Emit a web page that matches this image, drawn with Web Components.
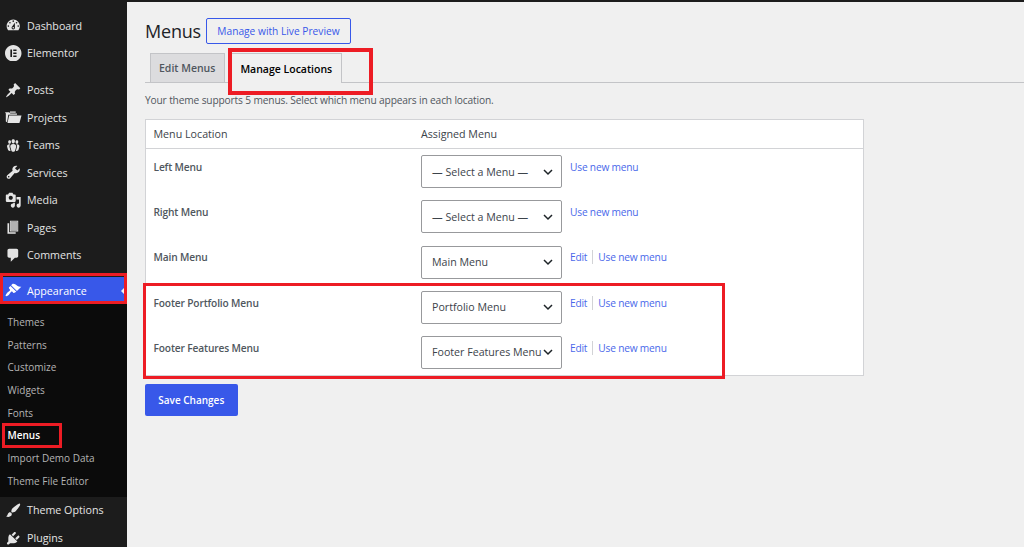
<!DOCTYPE html>
<html>
<head>
<meta charset="utf-8">
<title>Menus</title>
<style>
  html, body { margin: 0; height: 100%; overflow: hidden; background: #f0f0f0; }
  body { font-family: "Open Sans", "Noto Sans", sans-serif; }
</style>
</head>
<body>
<wp-admin>
  <wp-sidebar slot="sidebar">
    <wp-menu-item icon="dashboard">Dashboard</wp-menu-item>
    <wp-menu-item icon="elementor">Elementor</wp-menu-item>
    <wp-menu-gap size="9.5"></wp-menu-gap>
    <wp-menu-item icon="pin">Posts</wp-menu-item>
    <wp-menu-item icon="folder">Projects</wp-menu-item>
    <wp-menu-item icon="groups">Teams</wp-menu-item>
    <wp-menu-item icon="wrench">Services</wp-menu-item>
    <wp-menu-item icon="media">Media</wp-menu-item>
    <wp-menu-item icon="pages">Pages</wp-menu-item>
    <wp-menu-item icon="comments">Comments</wp-menu-item>
    <wp-menu-gap size="8"></wp-menu-gap>
    <wp-menu-item icon="appearance" current>Appearance</wp-menu-item>
    <wp-submenu>
      <wp-sub-item>Themes</wp-sub-item>
      <wp-sub-item>Patterns</wp-sub-item>
      <wp-sub-item>Customize</wp-sub-item>
      <wp-sub-item>Widgets</wp-sub-item>
      <wp-sub-item>Fonts</wp-sub-item>
      <wp-sub-item current>Menus</wp-sub-item>
      <wp-sub-item>Import Demo Data</wp-sub-item>
      <wp-sub-item>Theme File Editor</wp-sub-item>
    </wp-submenu>
    <wp-menu-item icon="brush">Theme Options</wp-menu-item>
    <wp-menu-item icon="plugins">Plugins</wp-menu-item>
  </wp-sidebar>

  <wp-page-head>Menus</wp-page-head>
  <wp-tabs>
    <wp-tab>Edit Menus</wp-tab>
    <wp-tab active>Manage Locations</wp-tab>
  </wp-tabs>
  <wp-note>Your theme supports 5 menus. Select which menu appears in each location.</wp-note>
  <wp-locations>
    <wp-location label="Left Menu" value="— Select a Menu —"></wp-location>
    <wp-location label="Right Menu" value="— Select a Menu —"></wp-location>
    <wp-location label="Main Menu" value="Main Menu" editable></wp-location>
    <wp-location label="Footer Portfolio Menu" value="Portfolio Menu" editable></wp-location>
    <wp-location label="Footer Features Menu" value="Footer Features Menu" editable></wp-location>
  </wp-locations>
  <wp-save>Save Changes</wp-save>

  <wp-mark slot="marks" x="0" y="273" w="127" h="31"></wp-mark>
  <wp-mark slot="marks" x="2" y="423" w="60" h="25"></wp-mark>
  <wp-mark slot="marks" x="228" y="48" w="145" h="47" t="4"></wp-mark>
  <wp-mark slot="marks" x="143" y="283" w="582" h="96"></wp-mark>
</wp-admin>

<script>
const ICONS = {
  dashboard: '<path d="M3.76 16h12.48c1.1-1.37 1.76-3.11 1.76-5 0-4.42-3.58-8-8-8s-8 3.58-8 8c0 1.89.66 3.63 1.76 5zM10 4c.55 0 1 .45 1 1s-.45 1-1 1-1-.45-1-1 .45-1 1-1zM6 6c.55 0 1 .45 1 1s-.45 1-1 1-1-.45-1-1 .45-1 1-1zm8 0c.55 0 1 .45 1 1s-.45 1-1 1-1-.45-1-1 .45-1 1-1zm-5.37 5.55L12 7v6c0 1.1-.9 2-2 2s-2-.9-2-2c0-.57.24-1.08.63-1.45zM4 10c.55 0 1 .45 1 1s-.45 1-1 1-1-.45-1-1 .45-1 1-1zm12 0c.55 0 1 .45 1 1s-.45 1-1 1-1-.45-1-1 .45-1 1-1zm-5 3c0-.55-.45-1-1-1s-1 .45-1 1 .45 1 1 1 1-.45 1-1z" fill-rule="evenodd"/>',
  elementor: '<path fill-rule="evenodd" d="M10 0C4.48 0 0 4.48 0 10s4.48 10 10 10 10-4.48 10-10S15.52 0 10 0zM6.5 5.5h2v9h-2zM10 5.5h4v1.9h-4zM10 9.05h4v1.9h-4zM10 12.6h4v1.9h-4z"/>',
  pin: '<path d="M10.44 3.02l1.82-1.82 6.36 6.35-1.83 1.82c-1.05-.68-2.48-.57-3.41.36l-.75.75c-.92.93-1.04 2.35-.35 3.41l-1.83 1.82-2.41-2.41-2.8 2.79c-.42.42-3.38 2.71-3.8 2.29s1.86-3.39 2.28-3.81l2.79-2.79L4.1 9.36l1.83-1.82c1.05.69 2.48.57 3.4-.36l.75-.75c.93-.92 1.05-2.35.36-3.41z"/>',
  folder: '<path d="M1 5.5 L0 4 h5 l1.5 1.5 h8 V7 H4 L2.5 16 L1 15z"/><path d="M5 8 h15 L17.5 17 H3z"/><path d="M6 3h7v1.5H6z"/>',
  groups: '<path d="M8.03 4.46c-.29 1.28.55 3.46 1.97 3.46 1.41 0 2.25-2.18 1.96-3.46-.22-.98-1.08-1.63-1.96-1.63-.89 0-1.74.65-1.97 1.63zm-4.13.9c-.25 1.08.47 2.93 1.67 2.93s1.92-1.85 1.67-2.93c-.19-.83-.92-1.39-1.67-1.39s-1.48.56-1.67 1.39zm8.86 0c-.25 1.08.47 2.93 1.66 2.93 1.2 0 1.92-1.85 1.67-2.93-.19-.83-.92-1.39-1.67-1.39-.74 0-1.47.56-1.66 1.39zm-.59 11.43l1.25-4.3C14.2 10 12.71 8.47 10 8.47c-2.72 0-4.21 1.53-3.44 4.02l1.26 4.3C8.05 17.51 9 18 10 18c.98 0 1.94-.49 2.17-1.21zm-6.1-7.63c-.49.67-.96 1.83-.42 3.59l1.12 3.79c-.34.2-.77.31-1.2.31-.85 0-1.65-.41-1.85-1.03l-1.07-3.65c-.65-2.11.61-3.4 2.92-3.4.27 0 .54.02.79.06-.1.1-.2.22-.29.33zm8.35-.39c2.31 0 3.58 1.29 2.92 3.4l-1.07 3.65c-.2.62-1 1.03-1.85 1.03-.43 0-.86-.11-1.2-.31l1.11-3.77c.55-1.78.08-2.94-.42-3.61-.08-.11-.18-.23-.28-.33.25-.04.51-.06.79-.06z"/>',
  wrench: '<path fill-rule="evenodd" d="M16.68 9.77c-1.34 1.34-3.3 1.67-4.95.99l-5.41 6.52c-.99.99-2.59.99-3.58 0s-.99-2.59 0-3.57l6.52-5.42c-.68-1.65-.35-3.61.99-4.95 1.28-1.28 3.12-1.62 4.72-1.06l-2.89 2.89 2.82 2.82 2.86-2.87c.53 1.58.18 3.39-1.08 4.66zM3.81 16.21c.4.39 1.04.39 1.43 0 .4-.4.4-1.04 0-1.43-.39-.4-1.03-.4-1.43 0-.39.39-.39 1.03 0 1.43z"/>',
  media: '<path fill-rule="evenodd" d="M13 11V4c0-.55-.45-1-1-1h-1.67L9 1H5L3.67 3H2c-.55 0-1 .45-1 1v7c0 .55.45 1 1 1h10c.55 0 1-.45 1-1zM7 4.5c1.38 0 2.5 1.12 2.5 2.5S8.38 9.5 7 9.5 4.5 8.38 4.5 7 5.62 4.5 7 4.5zM14 6h5v10.5c0 1.38-1.12 2.5-2.5 2.5S14 17.88 14 16.5s1.12-2.5 2.5-2.5c.17 0 .34.02.5.05V9h-3V6zm-4 8.05V13h2v3.5c0 1.38-1.12 2.5-2.5 2.5S7 17.88 7 16.5 8.12 14 9.5 14c.17 0 .34.02.5.05z"/>',
  pages: '<path fill-rule="evenodd" d="M6 15V2h10v13H6zm1-1h8V3H7v11zM5 16h8v2H3V5h2v11z"/><path d="M7 3h8v11H7z" opacity=".75"/>',
  comments: '<path d="M5 2h9c1.1 0 2 .9 2 2v7c0 1.1-.9 2-2 2h-2l-5 5v-5H5c-1.1 0-2-.9-2-2V4c0-1.1.9-2 2-2z"/>',
  appearance: '<path d="M14.48 11.06L7.41 3.99l1.5-1.5c.5-.56 2.3-.47 3.51.32 1.21.8 1.43 1.28 2.91 2.1 1.18.64 2.45 1.26 4.45.85zm-.71.71L6.7 4.7 4.93 6.47c-.39.39-.39 1.02 0 1.41l1.06 1.06c.39.39.39 1.03 0 1.42-.6.6-1.43 1.11-2.21 1.69-.35.26-.7.53-1.01.84-1.43 1.43-2.55 3.34-1.84 4.05.71.71 2.62-.41 4.05-1.84.31-.31.58-.66.84-1.01.58-.78 1.09-1.61 1.69-2.21.39-.39 1.03-.39 1.42 0l1.06 1.06c.39.39 1.02.39 1.41 0z"/>',
  brush: '<path d="M18.33 3.57s.27-.8-.31-1.36c-.53-.52-1.22-.24-1.22-.24-.61.3-5.76 3.47-7.67 5.57-.86.96-2.06 3.79-1.09 4.82.92.98 3.96-.17 4.79-1 2.06-2.06 5.21-7.17 5.5-7.79zM1.4 17.65c2.37-1.56 1.46-3.41 3.23-4.64.93-.65 2.22-.62 3.08.29.63.67.8 2.57-.16 3.46-1.57 1.45-4 1.55-6.15.89z"/>',
  plugins: '<path d="M13.11 4.36L9.87 7.6 8 5.73l3.24-3.24c.35-.34 1.05-.2 1.56.32.52.51.66 1.21.31 1.55zm-8 1.77l.91-1.12 9.01 9.01-1.19.84c-.71.71-2.63 1.16-3.82 1.16H6.14L4.9 17.26c-.59.59-1.54.59-2.12 0-.59-.58-.59-1.53 0-2.12l1.24-1.24v-3.88c0-1.13.4-3.19 1.09-3.89zm7.26 3.97l3.24-3.24c.34-.35 1.04-.21 1.55.31.52.51.66 1.21.31 1.55l-3.24 3.25z"/>'
};

// small helper so each element only declares its shadow markup
class ShadowEl extends HTMLElement {
  render(html) {
    if (!this.shadowRoot) this.attachShadow({ mode: 'open' });
    this.shadowRoot.innerHTML = html;
  }
}

class WpAdmin extends ShadowEl {
  connectedCallback() {
    this.render(`
      <style>
        :host { display: flex; width: 1024px; height: 547px; overflow: hidden; position: relative; box-sizing: border-box; border-top: 2px solid #1c1c1c; }
        main { flex: 1; padding: 16px 0 0 18px; min-width: 0; }
        .marks { position: absolute; left: 0; top: -2px; width: 0; height: 0; }
      </style>
      <slot name="sidebar"></slot>
      <main><slot></slot></main>
      <div class="marks"><slot name="marks"></slot></div>`);
  }
}

class WpSidebar extends ShadowEl {
  connectedCallback() {
    this.render(`
      <style>
        :host { display: block; width: 127px; flex: none; background: #1c1c1c; padding-top: 9.8px; box-sizing: border-box; color: #e4e4e4; font-size: 10.7px; }
      </style>
      <slot></slot>`);
  }
}

class WpMenuItem extends ShadowEl {
  connectedCallback() {
    const current = this.hasAttribute('current');
    this.render(`
      <style>
        :host { display: flex; align-items: center; height: 27.5px; position: relative; padding-left: 5px; gap: 5.5px; color: #e4e4e4; }
        :host([current]) { background: #3858e9; color: #fff; }
        svg { width: 16.5px; height: 16.5px; fill: currentColor; flex: none; }
        .notch { position: absolute; right: 3px; top: 11px; border: 3px solid transparent; border-right-color: #f4f4f4; border-left-width: 0; }
      </style>
      <svg viewBox="0 0 20 20">${ICONS[this.getAttribute('icon')] || ''}</svg>
      <span><slot></slot></span>
      ${current ? '<i class="notch"></i>' : ''}`);
  }
}

class WpMenuGap extends ShadowEl {
  connectedCallback() {
    this.render(`<style>:host { display: block; height: ${this.getAttribute('size')}px; }</style>`);
  }
}

class WpSubmenu extends ShadowEl {
  connectedCallback() {
    this.render(`
      <style>:host { display: block; background: #0b0b0b; padding: 6.4px 0 4.4px; }</style>
      <slot></slot>`);
  }
}

class WpSubItem extends ShadowEl {
  connectedCallback() {
    this.render(`
      <style>
        :host { display: flex; align-items: center; height: 22.7px; padding-left: 7.5px; color: #b4b4b4; font-size: 10px; }
        :host([current]) { color: #fff; font-weight: 600; }
      </style>
      <slot></slot>`);
  }
}

class WpPageHead extends ShadowEl {
  connectedCallback() {
    this.render(`
      <style>
        :host { display: flex; align-items: center; height: 26px; color: #1d2327; }
        h1 { margin: 0; width: 61px; font-size: 18px; font-weight: 400; letter-spacing: -.2px; }
        a { display: flex; align-items: center; box-sizing: border-box; height: 26px; width: 145px; justify-content: center; border: 1px solid #3858e9; border-radius: 2px; color: #3858e9; font-size: 10.2px; font-weight: 500; }
      </style>
      <h1><slot></slot></h1>
      <a>Manage with Live Preview</a>`);
  }
}

class WpTabs extends ShadowEl {
  connectedCallback() {
    this.render(`
      <style>
        :host { display: flex; margin-top: 9px; padding-left: 5px; gap: 6px; height: 29px; border-bottom: 1px solid #c3c4c7; }
      </style>
      <slot></slot>`);
  }
}

class WpTab extends ShadowEl {
  connectedCallback() {
    this.render(`
      <style>
        :host { display: flex; align-items: center; padding: 0 9px 0 8px; height: 29px; box-sizing: border-box; border: 1px solid #c3c4c7; border-bottom: 0; background: #dcdcde; color: #50575e; font-size: 10.5px; font-weight: 600; }
        :host([active]) { background: #f0f0f0; color: #000; height: 30px; }
      </style>
      <slot></slot>`);
  }
}

class WpNote extends ShadowEl {
  connectedCallback() {
    this.render(`
      <style>:host { display: block; margin-top: 10px; height: 15px; line-height: 15px; font-size: 10.2px; letter-spacing: -.15px; color: #50575e; }</style>
      <slot></slot>`);
  }
}

class WpLocations extends ShadowEl {
  connectedCallback() {
    this.render(`
      <style>
        :host { display: block; width: 719px; margin-top: 11px; box-sizing: border-box; background: #fff; border: 1px solid #d2d3d6; color: #50575e; font-size: 10.7px; }
        header { display: grid; grid-template-columns: 267.5px 1fr; height: 28.2px; align-items: center; padding-left: 7.5px; border-bottom: 1px solid #d2d3d6; color: #3c434a; }
      </style>
      <header><span>Menu Location</span><span>Assigned Menu</span></header>
      <slot></slot>`);
  }
}

class WpLocation extends ShadowEl {
  connectedCallback() {
    const edit = this.hasAttribute('editable');
    this.render(`
      <style>
        :host { display: grid; grid-template-columns: 267.5px 141px 1fr; height: 45.2px; padding-left: 7.5px; box-sizing: border-box; }
        .label { padding-top: 10.8px; font-size: 10.2px; font-weight: 600; letter-spacing: -.15px; }
        .select { display: flex; align-items: center; justify-content: space-between; box-sizing: border-box; height: 33px; margin-top: 6px; padding: 0 7px 0 10px; border: 1px solid #98999c; border-radius: 2px; color: #3c434a; white-space: nowrap; font-size: 10.65px; }
        svg { width: 12px; height: 12px; flex: none; }
        .links { display: flex; align-items: flex-start; padding: 10.8px 0 0 8px; font-size: 10.2px; letter-spacing: -.2px; color: #4a68ea; }
        .links i { width: 1px; height: 14px; margin: 0 5px; background: #d2d3d6; }
      </style>
      <div class="label">${this.getAttribute('label')}</div>
      <div class="select"><span>${this.getAttribute('value')}</span>
        <svg viewBox="0 0 12 12"><path d="M2 4l4 4 4-4" fill="none" stroke="#1d2327" stroke-width="1.5"/></svg></div>
      <div class="links">${edit ? '<span>Edit</span><i></i>' : ''}<span>Use new menu</span></div>`);
  }
}

class WpSave extends ShadowEl {
  connectedCallback() {
    this.render(`
      <style>
        :host { display: flex; align-items: center; justify-content: center; width: 92.5px; height: 32px; margin-top: 8px; background: #3858e9; border-radius: 2px; color: #fff; font-size: 10px; font-weight: 600; }
      </style>
      <slot></slot>`);
  }
}

// red annotation boxes drawn over the screenshot
class WpMark extends ShadowEl {
  connectedCallback() {
    const a = n => this.getAttribute(n);
    this.render(`
      <style>
        :host { display: block; position: absolute; left: ${a('x')}px; top: ${a('y')}px; width: ${a('w')}px; height: ${a('h')}px; box-sizing: border-box; border: ${a('t') || 3}px solid #ed1c24; }
      </style>`);
  }
}

customElements.define('wp-admin', WpAdmin);
customElements.define('wp-sidebar', WpSidebar);
customElements.define('wp-menu-item', WpMenuItem);
customElements.define('wp-menu-gap', WpMenuGap);
customElements.define('wp-submenu', WpSubmenu);
customElements.define('wp-sub-item', WpSubItem);
customElements.define('wp-page-head', WpPageHead);
customElements.define('wp-tabs', WpTabs);
customElements.define('wp-tab', WpTab);
customElements.define('wp-note', WpNote);
customElements.define('wp-locations', WpLocations);
customElements.define('wp-location', WpLocation);
customElements.define('wp-save', WpSave);
customElements.define('wp-mark', WpMark);
</script>
</body>
</html>
